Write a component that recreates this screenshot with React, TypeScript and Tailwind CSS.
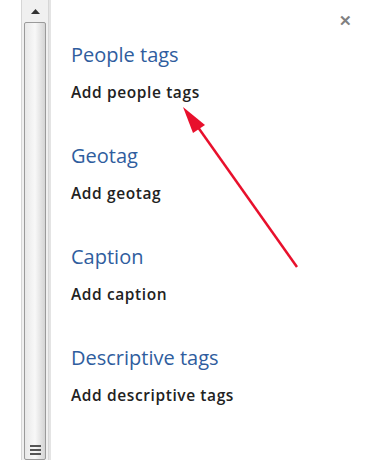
const sections = [
  { title: "People tags", action: "Add people tags" },
  { title: "Geotag", action: "Add geotag" },
  { title: "Caption", action: "Add caption" },
  { title: "Descriptive tags", action: "Add descriptive tags" },
];

function Scrollbar() {
  return (
    <div className="flex h-full w-[28px] flex-col border-x border-[#d6d6d6] bg-[#f0f0f0]">
      <div className="flex h-[22px] items-center justify-center">
        <svg width="9" height="5" viewBox="0 0 9 5">
          <path d="M0 5 L4.5 0 L9 5 Z" fill="#333" />
        </svg>
      </div>
      <div className="mx-[2px] flex flex-1 flex-col items-center justify-end rounded-[2px] border border-[#9a9a9a] bg-gradient-to-r from-[#e8e8e8] via-[#f8f8f8] to-[#d4d4d4] pb-[4px]">
        <div className="flex flex-col gap-[2px]">
          <div className="h-[2px] w-[11px] bg-[#555]" />
          <div className="h-[2px] w-[11px] bg-[#555]" />
          <div className="h-[2px] w-[11px] bg-[#555]" />
        </div>
      </div>
    </div>
  );
}

export default function App() {
  return (
    <div className="relative flex h-[460px] w-[368px] overflow-hidden bg-white font-['Open_Sans',sans-serif]">
      <div className="w-[21px] shrink-0" />
      <Scrollbar />
      <div className="w-[2px] shrink-0 bg-[#e4e4e4]" />
      <div className="flex flex-1 flex-col pl-[20px] pt-[42px]">
        {sections.map((s) => (
          <div key={s.title} className="mb-[41px] flex flex-col">
            <div className="text-[20px] leading-[26px] text-[#2f5d9e]">{s.title}</div>
            <div className="mt-[14px] text-[15.5px] font-semibold leading-[20px] tracking-[0.6px] text-[#222]">
              {s.action}
            </div>
          </div>
        ))}
      </div>
      <div className="absolute right-[16px] top-[13px] text-[15px] font-bold leading-none text-[#808080]">✕</div>
      <svg className="absolute left-0 top-0" width="368" height="460">
        <line x1="297" y1="267" x2="195" y2="123" stroke="#e8102c" strokeWidth="2.5" />
        <path d="M183 107 L205 125 L193 133 Z" fill="#e8102c" />
      </svg>
    </div>
  );
}
